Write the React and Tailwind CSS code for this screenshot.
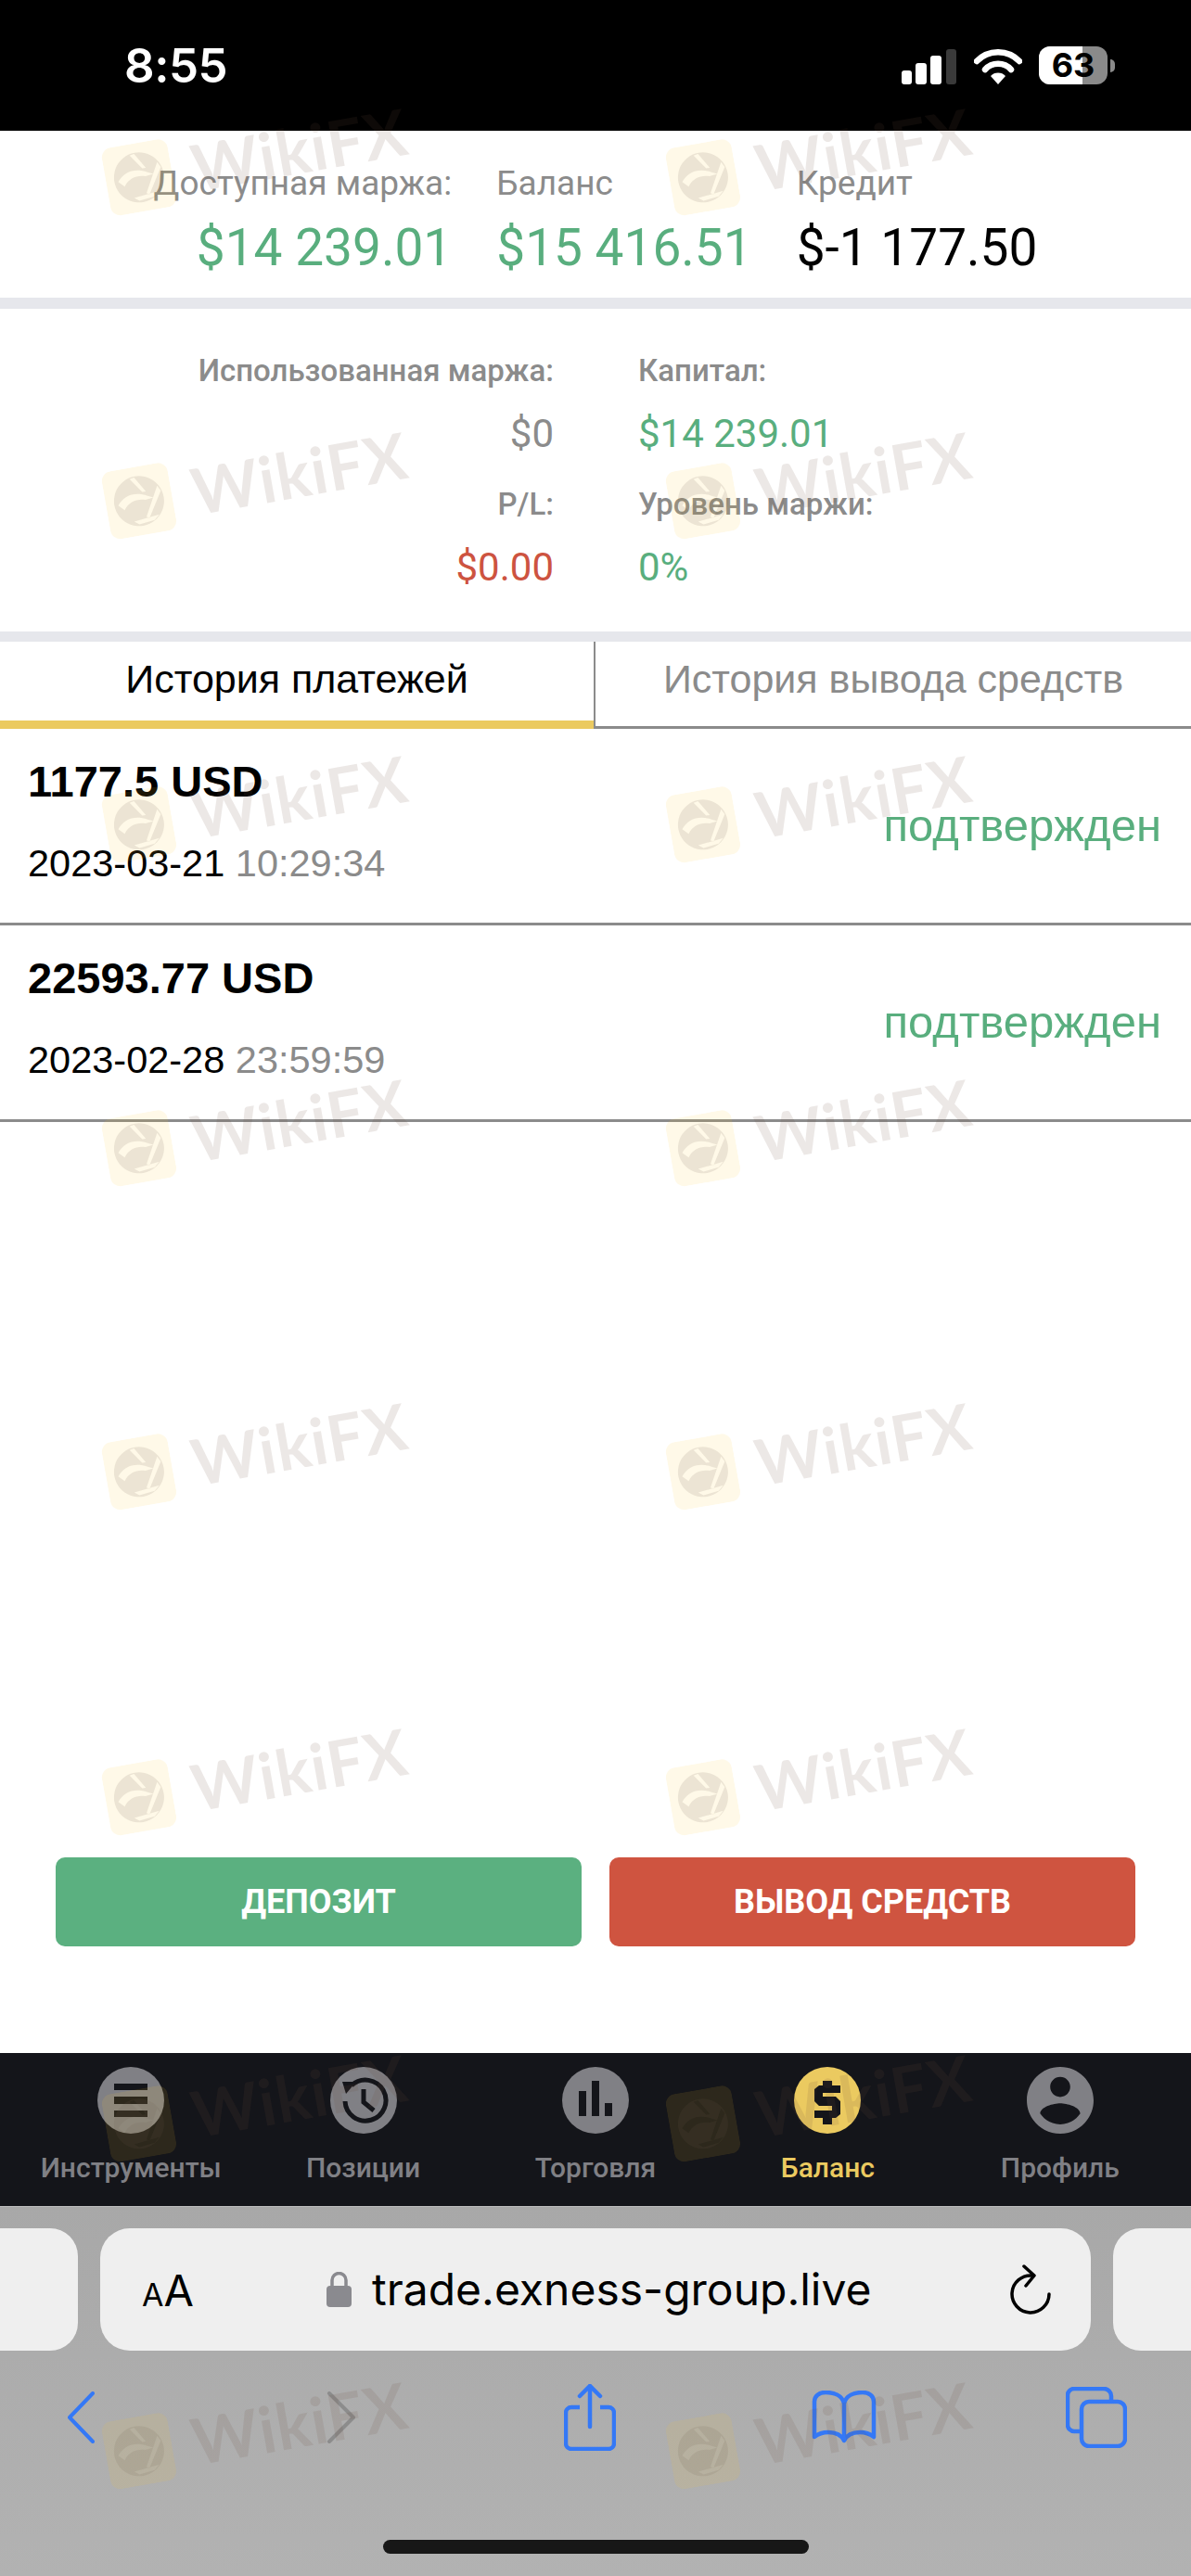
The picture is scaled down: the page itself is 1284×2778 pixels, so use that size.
const GREEN = "text-[#59ae7e]";

const marks = [144, 493, 842, 1191, 1540, 1891, 2243, 2596];

function Watermark({ left, top }) {
  return (
    <div
      aria-hidden="true"
      className="absolute flex items-center gap-[22px] rotate-[-10deg] pointer-events-none select-none"
      style={{ left, top: top - 12 }}
    >
      <svg width="72" height="74" viewBox="0 0 72 74" className="shrink-0">
        <rect width="72" height="74" rx="11" fill="rgba(255,200,50,0.11)" />
        <path
          d="M36 10a27 27 0 1 1-.1 0zM30 12l5-1 10 17-4 0zM58 24l3 6-17 27-3-2zM27 58l28-3-6 5-17 2zM13 38c8-10 20-12 33-5l6 3-9 1c-9-3-18-1-24 7z"
          fill="rgba(110,90,80,0.13)"
          fillRule="evenodd"
        />
      </svg>
      <span className="font-['Lato',sans-serif] font-bold text-[69px] leading-[70px] tracking-[1px] text-[rgba(110,80,60,0.13)]">
        WikiFX
      </span>
    </div>
  );
}

function StatusBar() {
  return (
    <div className="h-[141px] shrink-0 bg-black flex items-center justify-between pl-[134px] pr-[82px]">
      <span className="font-['Inter',sans-serif] font-semibold text-[51px] leading-none text-white tracking-[-0.5px]">8:55</span>
      <div className="flex items-end gap-[18px]">
        <svg width="60" height="38" viewBox="0 0 60 38">
          <rect x="0" y="23" width="11" height="15" rx="3" fill="#fff" />
          <rect x="15" y="15" width="12" height="23" rx="3" fill="#fff" />
          <rect x="31" y="7" width="12" height="31" rx="3" fill="#fff" />
          <rect x="48" y="0" width="11" height="38" rx="3" fill="#3a3a3a" />
        </svg>
        <svg width="52" height="38" viewBox="0 0 52 38">
          <path d="M3 13a32 32 0 0 1 46 0" fill="none" stroke="#fff" strokeWidth="6.5" strokeLinecap="round" />
          <path d="M12 22a19 19 0 0 1 28 0" fill="none" stroke="#fff" strokeWidth="6.5" strokeLinecap="round" />
          <path d="M18 29a11 11 0 0 1 16 0l-8 9z" fill="#fff" />
        </svg>
        <div className="flex items-center gap-[3px]">
          <div className="relative w-[74px] h-[41px] rounded-[12px] bg-[#8a8a8a] flex items-center justify-center">
            <div className="absolute inset-y-0 left-0 w-[47px] rounded-l-[12px] bg-white" />
            <span className="relative font-['Inter',sans-serif] font-bold text-[36px] leading-[41px] text-black">63</span>
          </div>
          <div className="w-[5px] h-[14px] rounded-r-full bg-[#8a8a8a]" />
        </div>
      </div>
    </div>
  );
}

function TopBalances() {
  const label = "text-[37px] leading-[40px] text-[#8b8b8b]";
  const value = "text-[55px] leading-[64px] mt-[17px]";
  return (
    <section className="h-[180px] shrink-0 flex justify-center gap-[48px] pt-[37px] font-['Roboto',sans-serif]">
      <div className="text-right">
        <div className={label}>Доступная маржа:</div>
        <div className={`${value} ${GREEN}`}>$14 239.01</div>
      </div>
      <div>
        <div className={label}>Баланс</div>
        <div className={`${value} ${GREEN}`}>$15 416.51</div>
      </div>
      <div>
        <div className={label}>Кредит</div>
        <div className={`${value} text-black`}>$-1 177.50</div>
      </div>
    </section>
  );
}

function MarginBlock() {
  const label = "text-[33px] leading-[40px] font-medium text-[#8b8b8b]";
  const value = "text-[42px] leading-[50px] mt-[23px]";
  return (
    <section className="h-[348px] shrink-0 grid grid-cols-[597px_1fr] gap-x-[91px] content-start pt-[47px] font-['Roboto',sans-serif]">
      <div className={`${label} text-right`}>Использованная маржа:</div>
      <div className={label}>Капитал:</div>
      <div className={`${value} text-right text-[#8b8b8b]`}>$0</div>
      <div className={`${value} ${GREEN}`}>$14 239.01</div>
      <div className={`${label} mt-[31px] text-right`}>P/L:</div>
      <div className={`${label} mt-[31px]`}>Уровень маржи:</div>
      <div className={`${value} text-right text-[#cd5340]`}>$0.00</div>
      <div className={`${value} ${GREEN}`}>0%</div>
    </section>
  );
}

function Tabs() {
  return (
    <div className="h-[94px] shrink-0 flex font-['Liberation_Sans',sans-serif] text-[43px]">
      <div className="w-[640px] border-b-[9px] border-[#ebca60] flex items-center justify-center text-black pb-[4px]">
        История платежей
      </div>
      <div className="flex-1 border-l-[2px] border-b-[3px] border-[#8b8b8b] flex items-center justify-center text-[#8b8b8b] pb-[10px]">
        История вывода средств
      </div>
    </div>
  );
}

function PaymentRow({ amount, date, time }) {
  return (
    <div className="h-[212px] shrink-0 flex items-center justify-between pl-[30px] pr-[32px] border-b-[3px] border-[#8b8b8b] font-['Liberation_Sans',sans-serif]">
      <div className="flex flex-col gap-[38px] pb-[8px]">
        <div className="font-bold text-[47px] leading-[50px] text-black">{amount}</div>
        <div className="text-[41.5px] leading-[50px] text-black">
          {date} <span className="text-[#8b8b8b]">{time}</span>
        </div>
      </div>
      <div className={`text-[49px] ${GREEN}`}>подтвержден</div>
    </div>
  );
}

function ActionButtons() {
  return (
    <div className="flex gap-[30px] px-[60px] pb-[115px] font-['Roboto',sans-serif] font-bold text-[36px] text-white">
      <button className="flex-1 h-[96px] rounded-[10px] bg-[#5bb080]">ДЕПОЗИТ</button>
      <button className="flex-1 h-[96px] rounded-[10px] bg-[#cf5440]">ВЫВОД СРЕДСТВ</button>
    </div>
  );
}

const MenuIcon = () => (
  <svg width="72" height="72" viewBox="0 0 72 72">
    <circle cx="36" cy="36" r="36" fill="#808085" />
    <path d="M18 18h36v7H18zM18 32h36v8H18zM18 47h36v7H18z" fill="#14151a" />
  </svg>
);

const HistoryIcon = () => (
  <svg width="72" height="72" viewBox="0 0 72 72">
    <circle cx="36" cy="36" r="36" fill="#808085" />
    <path d="M16 37a22 22 0 1 0 7-17M36 24v14l11 9" fill="none" stroke="#14151a" strokeWidth="5" />
    <path d="M13 16l15 0-11 13z" fill="#14151a" />
  </svg>
);

const BarsIcon = () => (
  <svg width="72" height="72" viewBox="0 0 72 72">
    <circle cx="36" cy="36" r="36" fill="#808085" />
    <path d="M18 26h8v27h-8zM32 15h8v38h-8zM46 39h8v14h-8z" fill="#14151a" />
  </svg>
);

const DollarIcon = () => (
  <svg width="72" height="72" viewBox="0 0 72 72">
    <circle cx="36" cy="36" r="36" fill="#ebca60" />
    <path
      d="M31 15h10v5h9v8H31v4h14l5 5v14l-5 4h-4v7H31v-7h-9v-8h19v-5H27l-5-5V24l5-4h4z"
      fill="#14151a"
    />
  </svg>
);

const ProfileIcon = () => (
  <svg width="72" height="72" viewBox="2 2 20 20">
    <path
      d="M12 2C6.48 2 2 6.48 2 12s4.48 10 10 10 10-4.48 10-10S17.52 2 12 2zm0 3c1.66 0 3 1.34 3 3s-1.34 3-3 3-3-1.34-3-3 1.34-3 3-3zm0 14.2c-2.5 0-4.71-1.28-6-3.22.03-1.99 4-3.08 6-3.08 1.99 0 5.97 1.09 6 3.08-1.29 1.94-3.5 3.22-6 3.22z"
      fill="#808085"
    />
  </svg>
);

const navItems = [
  { label: "Инструменты", icon: <MenuIcon /> },
  { label: "Позиции", icon: <HistoryIcon /> },
  { label: "Торговля", icon: <BarsIcon /> },
  { label: "Баланс", icon: <DollarIcon />, active: true },
  { label: "Профиль", icon: <ProfileIcon /> },
];

function BottomNav() {
  return (
    <nav className="h-[165px] shrink-0 bg-[#14151a] grid grid-cols-5 px-[16px] pt-[15px] font-['Roboto',sans-serif]">
      {navItems.map((item) => (
        <div key={item.label} className="flex flex-col items-center">
          {item.icon}
          <span className={`mt-[19px] text-[30px] leading-[36px] font-medium ${item.active ? "text-[#ebca60]" : "text-[#808085]"}`}>
            {item.label}
          </span>
        </div>
      ))}
    </nav>
  );
}

function SafariBar() {
  return (
    <div className="h-[399px] shrink-0 bg-gradient-to-b from-[#a8a8a8] to-[#b2b2b2] border-t border-[#bdbdbd] flex flex-col">
      <div className="flex gap-[24px] mt-[23px] h-[132px]">
        <div className="w-[84px] rounded-r-[30px] bg-[#efefef]" />
        <div className="flex-1 rounded-[32px] bg-[#efefef] flex items-center pl-[45px] pr-[43px]">
          <span className="font-['Inter',sans-serif] text-black leading-none flex items-baseline w-[199px] whitespace-nowrap">
            <span className="text-[34px]">A</span>
            <span className="text-[47px]">A</span>
          </span>
          <svg width="27" height="38" viewBox="0 0 27 38" className="shrink-0">
            <path d="M6 17V9a7.5 7.5 0 0 1 15 0v8" fill="none" stroke="#8a8a8f" strokeWidth="3.5" />
            <rect y="15" width="27" height="23" rx="4" fill="#8a8a8f" />
          </svg>
          <span className="ml-[22px] font-['Inter',sans-serif] text-[48px] leading-none text-black whitespace-nowrap">trade.exness-group.live</span>
          <svg width="44" height="54" viewBox="0 0 44 54" className="ml-auto shrink-0" fill="none" stroke="#000" strokeWidth="3.5" strokeLinecap="round" strokeLinejoin="round">
            <path d="M24 12A20 20 0 1 0 42 32" />
            <path d="M15 2l11 10-9 11" />
          </svg>
        </div>
        <div className="w-[84px] rounded-l-[30px] bg-[#efefef]" />
      </div>
      <div className="flex items-center h-[72px] mt-[36px] pl-[72px]">
        <svg width="30" height="56" viewBox="0 0 30 56">
          <path d="M28 2L3 28l25 26" fill="none" stroke="#3478f6" strokeWidth="4" strokeLinecap="round" strokeLinejoin="round" />
        </svg>
        <svg width="32" height="56" viewBox="0 0 32 56" className="ml-[250px]">
          <path d="M3 2l26 26L3 54" fill="none" stroke="#8c8c8c" strokeWidth="4" strokeLinecap="round" strokeLinejoin="round" />
        </svg>
        <svg width="56" height="72" viewBox="0 0 56 72" className="ml-[224px]" fill="none" stroke="#3478f6" strokeWidth="4.5">
          <path d="M17 25H8a6 6 0 0 0-6 6v33a6 6 0 0 0 6 6h40a6 6 0 0 0 6-6V31a6 6 0 0 0-6-6h-9" />
          <path d="M28 2v44M17 13L28 2l11 11" strokeLinecap="round" />
        </svg>
        <svg width="70" height="58" viewBox="0 0 70 58" className="ml-[211px]" fill="none" stroke="#3478f6" strokeWidth="4.5" strokeLinejoin="round">
          <path d="M35 14C33 5 24 2 15 2 8 2 3 6 3 12v38c5-4 10-5 15-5 8 0 14 3 17 9 3-6 9-9 17-9 5 0 10 1 15 5V12c0-6-5-10-12-10-9 0-18 3-20 12zM35 14v40" />
        </svg>
        <svg width="66" height="66" viewBox="0 0 66 66" className="ml-[204px]" fill="none" stroke="#3478f6" strokeWidth="4.5">
          <path d="M16 48H9a7 7 0 0 1-7-7V9a7 7 0 0 1 7-7h32a8 8 0 0 1 8 8v6" />
          <rect x="17" y="16" width="47" height="48" rx="8" />
        </svg>
      </div>
      <div className="w-[459px] h-[15px] rounded-full bg-[#171717] mx-auto mt-[96px]" />
    </div>
  );
}

export default function App() {
  return (
    <div className="relative w-[1284px] h-[2778px] overflow-hidden bg-white flex flex-col">
      <StatusBar />
      <TopBalances />
      <div className="h-[12px] shrink-0 bg-[#e6e7ec]" />
      <MarginBlock />
      <div className="h-[11px] shrink-0 bg-[#e6e7ec]" />
      <Tabs />
      <PaymentRow amount="1177.5 USD" date="2023-03-21" time="10:29:34" />
      <PaymentRow amount="22593.77 USD" date="2023-02-28" time="23:59:59" />
      <div className="flex-1" />
      <ActionButtons />
      <BottomNav />
      <SafariBar />
      {marks.map((top) => (
        <div key={top}>
          <Watermark left={112} top={top} />
          <Watermark left={720} top={top} />
        </div>
      ))}
    </div>
  );
}
